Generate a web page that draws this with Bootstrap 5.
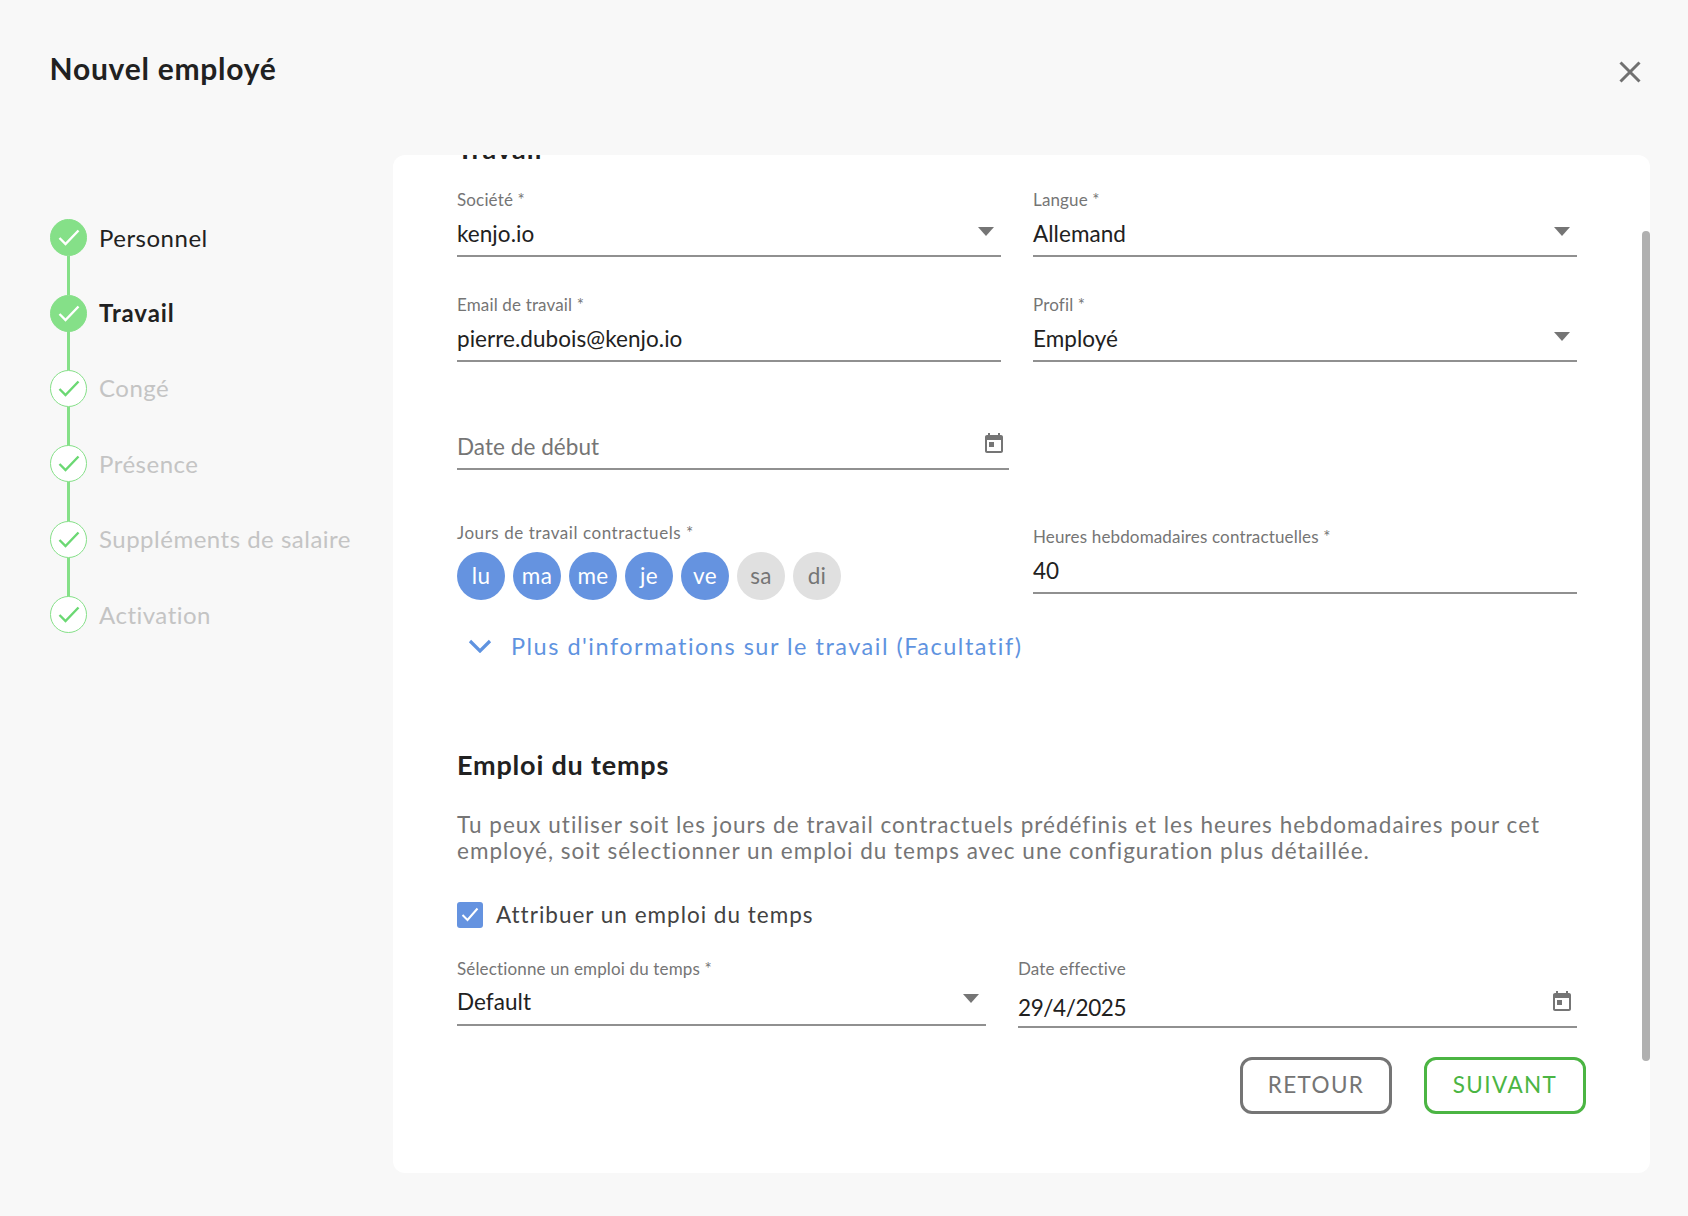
<!DOCTYPE html>
<html lang="fr">
<head>
<meta charset="utf-8">
<title>Nouvel employé</title>
<link rel="stylesheet" href="https://cdn.jsdelivr.net/npm/bootstrap@5.3.0/dist/css/bootstrap.min.css">
<style>
html,body{height:100%}
body{background:#f8f8f8;font-family:"Lato","Noto Sans",sans-serif;color:#212121;overflow:hidden;font-size:20px}
.shell{height:1216px}
.topbar{height:155px;padding:46px 38px 0 49.5px}
.ttl{font-size:30px;font-weight:700;line-height:44px;margin:0;letter-spacing:.75px}
.closer{border:0;background:none;padding:0;width:24px;height:24px;margin-top:14px;margin-right:8px;line-height:0}
.side{width:393px;padding:45px 0 0 50px;flex:none}
.stp{height:75.4px;gap:12px;position:relative;font-size:24px;letter-spacing:.5px;color:#c4c4c4}
.stp:not(:last-child)::after{content:"";position:absolute;left:17px;top:56px;width:3px;height:39px;background:#85e088}
.stp.on{color:#212121}
.stp.cur{font-weight:700;letter-spacing:.9px}
.dot{width:37px;height:37px;border-radius:50%;background:#fff;border:1px solid #85e088;color:#6bd873;flex:none}
.on .dot{background:#85e088;color:#fff}
.panel{width:1257px;height:1018px;background:#fff;border-radius:12px;position:relative;overflow:hidden;padding:0 73px 0 64px}
.thumb{position:absolute;right:0;top:76px;width:8px;height:830px;background:#b0b0b0;border-radius:4px}
.clip{font-size:27px;font-weight:700;line-height:30px;margin:-21px 0 0;height:55px;letter-spacing:1.1px}
.row.fields{--bs-gutter-x:32px;--bs-gutter-y:0}
.fld{height:105px}
.fld.dated{height:124px;padding-top:3px}
.hrs{padding-top:3px}
.lbl{font-size:17px;line-height:22px;color:#757575;display:block;letter-spacing:.15px}
.val{height:44px;border-bottom:2px solid #909090;line-height:46px;font-size:22.5px;position:relative;box-sizing:content-box;letter-spacing:.05px}
.val.tight{line-height:43px}
.val.low{height:46px;line-height:56px;letter-spacing:-.4px}
.tri{position:absolute;right:7px;top:16px;width:0;height:0;border-left:8px solid transparent;border-right:8px solid transparent;border-top:9px solid #757575}
.tight .tri{top:14px}
.cal{position:absolute;right:3px;top:8px;width:24px;height:24px}
.low .cal{top:10px}
.wide{width:552px}
.muted{color:#757575}
.daylbl{font-size:17px;line-height:20px;color:#757575;letter-spacing:.55px;margin-bottom:9px}
.dayc{width:48px;height:48px;border-radius:50%;background:#6593e0;color:#fff;font-size:22.5px;letter-spacing:.3px}
.dayc.off{background:#e0e0e0;color:#757575}
.more{color:#5f93e0;letter-spacing:1.5px;font-size:23.5px;line-height:28px;margin-top:31.5px;gap:19px;padding-left:11px}
.h2x{font-size:27px;font-weight:700;line-height:32px;margin:89px 0 31px;letter-spacing:.8px}
.par{font-size:22.5px;line-height:26px;color:#757575;letter-spacing:1.01px;margin:0 0 38px}
.chk{width:26px;height:26px;background:#6593e0;border-radius:3px;flex:none}
.chkl{gap:13px;font-size:22.5px;letter-spacing:1px;line-height:26px;color:#424242}
.lastr{gap:32px;margin-top:30px}
.cola{width:529px}
.colb{width:559px}
.act{gap:32px;justify-content:flex-end;margin:29px -9px 0 0}
.bt{height:57px;border:3px solid #757575;background:#fff;border-radius:12px;font-size:22.5px;letter-spacing:1.4px;color:#757575;padding:0;line-height:1}
.bt.go{border-color:#4bb543;color:#4bb543;width:162px}
.bt.bk{width:152px}
</style>
</head>
<body>
<div class="shell d-flex flex-column">
  <div class="topbar d-flex justify-content-between align-items-start">
    <h1 class="ttl">Nouvel employé</h1>
    <button class="closer" type="button" aria-label="Fermer"><svg width="24" height="24" viewBox="0 0 24 24"><path d="M2.500 2.500l19 19M21.500 2.500l-19 19" stroke="#707070" stroke-width="3" fill="none"/></svg></button>
  </div>
  <div class="d-flex">
    <div class="side">
      <div class="stp on d-flex align-items-center"><span class="dot d-flex align-items-center justify-content-center"><svg width="22" height="17" viewBox="0 0 22 17"><path d="M1.500 9l6 6L20.500 1.500" stroke="currentColor" stroke-width="2.400" fill="none"/></svg></span>Personnel</div>
      <div class="stp on cur d-flex align-items-center"><span class="dot d-flex align-items-center justify-content-center"><svg width="22" height="17" viewBox="0 0 22 17"><path d="M1.500 9l6 6L20.500 1.500" stroke="currentColor" stroke-width="2.400" fill="none"/></svg></span>Travail</div>
      <div class="stp d-flex align-items-center"><span class="dot d-flex align-items-center justify-content-center"><svg width="22" height="17" viewBox="0 0 22 17"><path d="M1.500 9l6 6L20.500 1.500" stroke="currentColor" stroke-width="2.400" fill="none"/></svg></span>Congé</div>
      <div class="stp d-flex align-items-center"><span class="dot d-flex align-items-center justify-content-center"><svg width="22" height="17" viewBox="0 0 22 17"><path d="M1.500 9l6 6L20.500 1.500" stroke="currentColor" stroke-width="2.400" fill="none"/></svg></span>Présence</div>
      <div class="stp d-flex align-items-center"><span class="dot d-flex align-items-center justify-content-center"><svg width="22" height="17" viewBox="0 0 22 17"><path d="M1.500 9l6 6L20.500 1.500" stroke="currentColor" stroke-width="2.400" fill="none"/></svg></span>Suppléments de salaire</div>
      <div class="stp d-flex align-items-center"><span class="dot d-flex align-items-center justify-content-center"><svg width="22" height="17" viewBox="0 0 22 17"><path d="M1.500 9l6 6L20.500 1.500" stroke="currentColor" stroke-width="2.400" fill="none"/></svg></span>Activation</div>
    </div>
    <div class="panel">
      <div class="thumb"></div>
      <div class="clip">Travail</div>
      <div class="row fields">
        <div class="col-6 fld"><span class="lbl">Société *</span><div class="val">kenjo.io<span class="tri"></span></div></div>
        <div class="col-6 fld"><span class="lbl">Langue *</span><div class="val">Allemand<span class="tri"></span></div></div>
        <div class="col-6 fld"><span class="lbl">Email de travail *</span><div class="val">pierre.dubois@kenjo.io</div></div>
        <div class="col-6 fld"><span class="lbl">Profil *</span><div class="val">Employé<span class="tri"></span></div></div>
        <div class="col-6 fld dated"><span class="lbl">&nbsp;</span><div class="val wide muted">Date de début<svg class="cal" viewBox="0 0 24 24"><path fill="#757575" d="M19 3h-1V1h-2v2H8V1H6v2H5c-1.110 0-1.990.900-1.990 2L3 19c0 1.100.890 2 2 2h14c1.100 0 2-.900 2-2V5c0-1.100-.900-2-2-2zm0 16H5V8h14v11zM7 10h5v5H7z"/></svg></div></div>
      </div>
      <div class="row fields">
        <div class="col-6">
          <div class="daylbl">Jours de travail contractuels *</div>
          <div class="d-flex gap-2">
            <span class="dayc d-flex align-items-center justify-content-center">lu</span>
            <span class="dayc d-flex align-items-center justify-content-center">ma</span>
            <span class="dayc d-flex align-items-center justify-content-center">me</span>
            <span class="dayc d-flex align-items-center justify-content-center">je</span>
            <span class="dayc d-flex align-items-center justify-content-center">ve</span>
            <span class="dayc off d-flex align-items-center justify-content-center">sa</span>
            <span class="dayc off d-flex align-items-center justify-content-center">di</span>
          </div>
        </div>
        <div class="col-6 hrs"><span class="lbl">Heures hebdomadaires contractuelles *</span><div class="val">40</div></div>
      </div>
      <div class="more d-flex align-items-center"><svg width="24" height="14" viewBox="0 0 24 14"><path d="M2 2l10 10L22 2" stroke="#5f93e0" stroke-width="3.200" fill="none"/></svg>Plus d'informations sur le travail (Facultatif)</div>
      <h2 class="h2x">Emploi du temps</h2>
      <p class="par">Tu peux utiliser soit les jours de travail contractuels prédéfinis et les heures hebdomadaires pour cet employé, soit sélectionner un emploi du temps avec une configuration plus détaillée.</p>
      <div class="chkl d-flex align-items-center"><span class="chk d-flex align-items-center justify-content-center"><svg width="18" height="15" viewBox="0 0 18 15"><path d="M1.500 8l5 5L16.500 1.500" stroke="#fff" stroke-width="2" fill="none"/></svg></span>Attribuer un emploi du temps</div>
      <div class="d-flex lastr">
        <div class="cola"><span class="lbl">Sélectionne un emploi du temps *</span><div class="val tight">Default<span class="tri"></span></div></div>
        <div class="colb"><span class="lbl">Date effective</span><div class="val low">29/4/2025<svg class="cal" viewBox="0 0 24 24"><path fill="#757575" d="M19 3h-1V1h-2v2H8V1H6v2H5c-1.110 0-1.990.900-1.990 2L3 19c0 1.100.890 2 2 2h14c1.100 0 2-.900 2-2V5c0-1.100-.900-2-2-2zm0 16H5V8h14v11zM7 10h5v5H7z"/></svg></div></div>
      </div>
      <div class="d-flex act">
        <button class="bt bk" type="button">RETOUR</button>
        <button class="bt go" type="button">SUIVANT</button>
      </div>
    </div>
  </div>
</div>
<script src="https://cdn.jsdelivr.net/npm/bootstrap@5.3.0/dist/js/bootstrap.bundle.min.js"></script>
</body>
</html>
